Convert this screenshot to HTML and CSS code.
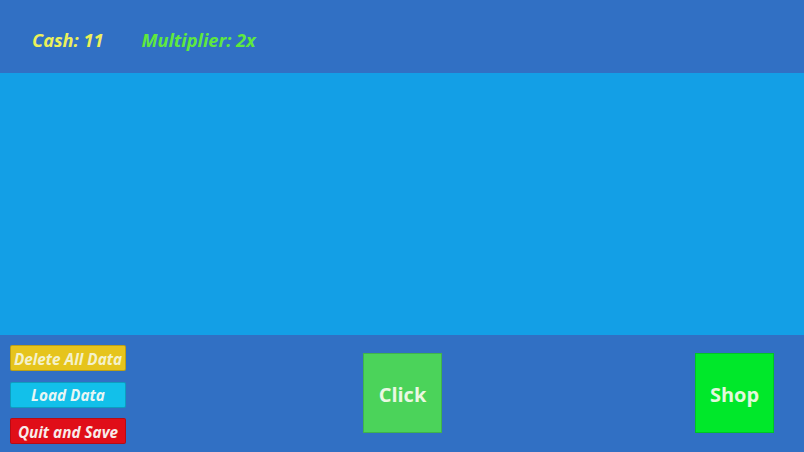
FILE: index.html
```html
<!DOCTYPE html>
<html>
<head>
<meta charset="utf-8">
<link rel="stylesheet" href="styles.css">
</head>
<body>
<div class="screen">
  <header class="topbar">
    <span class="stat cash">Cash: 11</span>
    <span class="stat mult">Multiplier: 2x</span>
  </header>
  <main class="field"></main>
  <footer class="bottombar">
    <div class="actions">
      <div class="btn small yellow">Delete All Data</div>
      <div class="btn small cyan">Load Data</div>
      <div class="btn small red">Quit and Save</div>
    </div>
    <div class="btn big click">Click</div>
    <div class="btn big shop">Shop</div>
  </footer>
</div>
</body>
</html>
```

FILE: styles.css
```css
html, body {
  margin: 0;
  padding: 0;
}
body {
  width: 804px;
  height: 452px;
  overflow: hidden;
  font-family: "Open Sans", "Noto Sans", sans-serif;
}
.screen {
  display: flex;
  flex-direction: column;
  height: 452px;
  background: #3170c4;
}
.topbar {
  height: 73px;
  display: flex;
  align-items: center;
  padding-left: 32px;
  gap: 38px;
  background: #3170c4;
}
.stat {
  font-weight: 700;
  font-style: italic;
  font-size: 18.2px;
  line-height: 1;
  margin-top: 7px;
}
.cash { color: #ecf05a; }
.mult { color: #5fe93e; }
.field {
  height: 262px;
  background: #139fe6;
}
.bottombar {
  flex: 1;
  display: flex;
  align-items: flex-start;
  padding: 10px 30px 0 10px;
}
.actions {
  display: flex;
  flex-direction: column;
  gap: 10.5px;
  width: 116px;
}
.btn {
  box-sizing: border-box;
  display: flex;
  align-items: center;
  justify-content: center;
  font-weight: 700;
  color: #f2f7e6;
  white-space: nowrap;
}
.small {
  height: 26px;
  padding-top: 1px;
  font-size: 15.3px;
  font-style: italic;
  border: 1px solid rgba(0, 0, 0, 0.18);
  border-radius: 2px;
}
.yellow { background: #e6c41c; color: #f4f2cc; }
.cyan { background: #12c0ea; color: #e8f6f4; }
.red { background: #e00e18; color: #f8ecea; }
.big {
  width: 79px;
  height: 80px;
  margin-top: 8px;
  padding-top: 2px;
  font-size: 20px;
  border: 1px solid rgba(0, 0, 0, 0.15);
}
.click {
  margin-left: 237px;
  background: #4bd35a;
  color: #eaf8e2;
}
.shop {
  margin-left: auto;
  background: #00e82a;
  color: #e4f8dc;
}
```
